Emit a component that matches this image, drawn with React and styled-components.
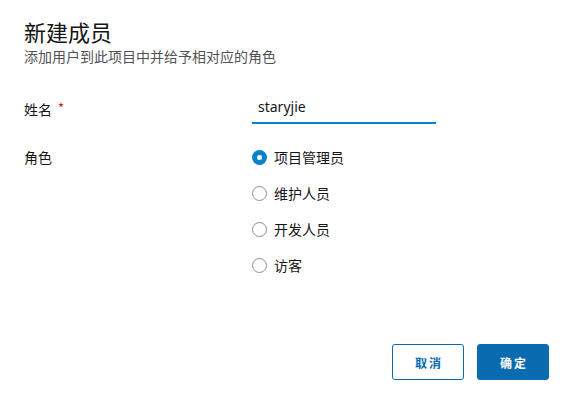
import React, { useState } from "react";
import styled, { createGlobalStyle } from "styled-components";

const Global = createGlobalStyle`
  html, body { margin: 0; padding: 0; background: #fff; }
  body { font-family: "Noto Sans CJK SC", "Noto Sans", sans-serif; color: #151515; }
  * { box-sizing: border-box; }
`;

const Page = styled.div`
  width: 571px;
  height: 402px;
  padding: 18px 22px 22px 24px;
  display: flex;
  flex-direction: column;
`;

const Title = styled.h1`
  margin: 0;
  font-size: 22px;
  font-weight: 400;
  line-height: 26px;
  color: #151515;
`;

const Subtitle = styled.p`
  margin: 2px 0 0;
  font-size: 14px;
  line-height: 20px;
  color: #4f5255;
`;

const Form = styled.div`
  margin-top: 24px;
  display: grid;
  grid-template-columns: 228px 1fr;
  row-gap: 23px;
`;

const Label = styled.div`
  font-size: 14px;
  line-height: 20px;
  padding-top: ${(p) => p.$top || 0}px;
  color: #151515;
`;

const Required = styled.span`
  color: #c9190b;
  margin-left: 6px;
  font-size: 13px;
  vertical-align: 2px;
`;

const Input = styled.input`
  width: 184px;
  height: 34px;
  border: none;
  border-bottom: 2px solid #0a82cb;
  outline: none;
  padding: 0 6px;
  font-family: "Noto Sans", sans-serif;
  font-size: 14px;
  color: #151515;
  caret-color: #151515;
  background: transparent;
`;

const RadioGroup = styled.div`
  display: flex;
  flex-direction: column;
  gap: 16px;
`;

const RadioRow = styled.label`
  display: flex;
  align-items: center;
  gap: 7px;
  height: 20px;
  font-size: 14px;
  color: #151515;
  cursor: pointer;
`;

const Circle = styled.span`
  width: 15px;
  height: 15px;
  border-radius: 50%;
  flex: none;
  display: flex;
  align-items: center;
  justify-content: center;
  background: ${(p) => (p.$checked ? "#0a82cb" : "#fff")};
  border: ${(p) => (p.$checked ? "none" : "1px solid #8a8d90")};
  &::after {
    content: "";
    display: ${(p) => (p.$checked ? "block" : "none")};
    width: 5px;
    height: 5px;
    border-radius: 50%;
    background: #fff;
  }
`;

const Footer = styled.div`
  margin-top: auto;
  display: flex;
  justify-content: flex-end;
  gap: 13px;
`;

const Button = styled.button`
  width: 72px;
  height: 36px;
  border-radius: 3px;
  font-family: "Noto Sans CJK SC", sans-serif;
  font-size: 12px;
  font-weight: 700;
  letter-spacing: 2px;
  padding: 0 0 0 2px;
  cursor: pointer;
  border: 1.5px solid #0a6bb0;
  background: ${(p) => (p.$primary ? "#0a6bb0" : "#fff")};
  color: ${(p) => (p.$primary ? "#fff" : "#0a6bb0")};
`;

const roles = ["项目管理员", "维护人员", "开发人员", "访客"];

export default function App() {
  const [name, setName] = useState("staryjie");
  const [role, setRole] = useState(0);
  return (
    <Page>
      <Global />
      <Title>新建成员</Title>
      <Subtitle>添加用户到此项目中并给予相对应的角色</Subtitle>
      <Form>
        <Label $top={8}>
          姓名<Required>*</Required>
        </Label>
        <div>
          <Input value={name} onChange={(e) => setName(e.target.value)} autoFocus />
        </div>
        <Label $top={0}>角色</Label>
        <RadioGroup>
          {roles.map((r, i) => (
            <RadioRow key={r} onClick={() => setRole(i)}>
              <Circle $checked={role === i} />
              {r}
            </RadioRow>
          ))}
        </RadioGroup>
      </Form>
      <Footer>
        <Button>取消</Button>
        <Button $primary>确定</Button>
      </Footer>
    </Page>
  );
}
